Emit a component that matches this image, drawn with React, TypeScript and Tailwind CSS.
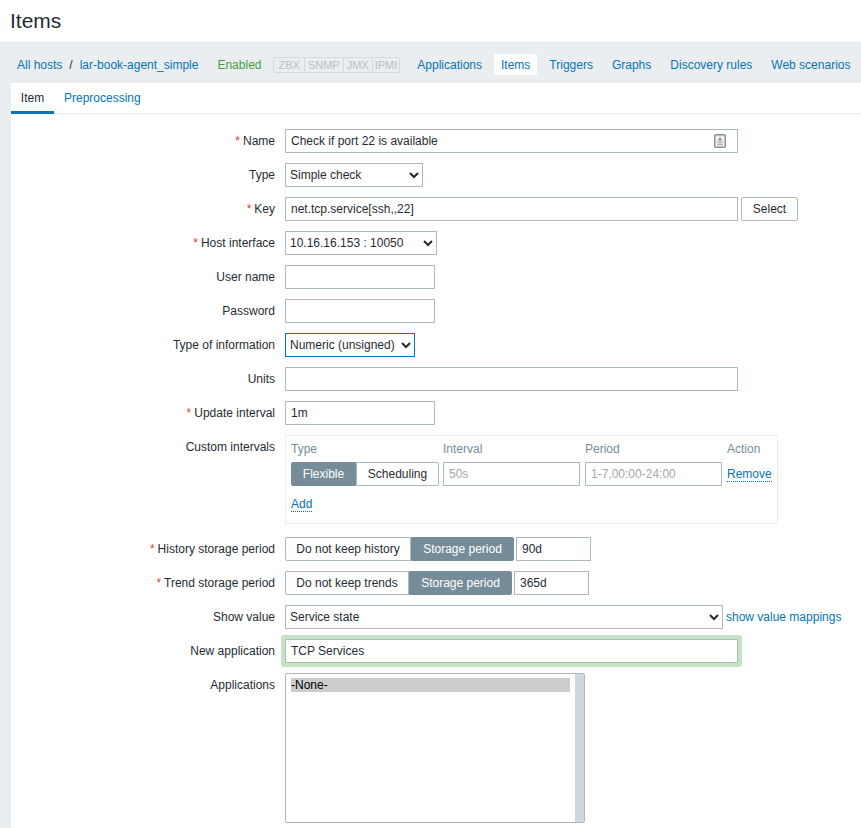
import React from "react";

const F = "h-[24px] border border-[#acbbc2] bg-white px-[5px] text-[12px] text-[#1f2c33] outline-none";
const S = "h-[24px] border bg-white text-[12px] text-[#1f2c33] outline-none";
const LINK = "text-[#0275b8]";

function Row({ label, req, children }: { label: string; req?: boolean; children: React.ReactNode }) {
  return (
    <div className="flex items-start">
      <div className="w-[274px] shrink-0 pr-[10px] pt-[4px] text-right leading-[16px]">
        {req && <span className="mr-[3px] text-[#e33734]">*</span>}
        {label}
      </div>
      {children}
    </div>
  );
}

function Seg({ left, right, leftW, rightW, active }: { left: string; right: string; leftW: number; rightW: number; active: "l" | "r" }) {
  const on = "flex h-[24px] items-center justify-center bg-[#768d99] text-white border border-[#768d99]";
  const off = "flex h-[24px] items-center justify-center bg-white text-[#1f2c33] border border-[#acbbc2]";
  return (
    <div className="flex shrink-0">
      <div className={`${active === "l" ? on : off} rounded-l-[2px]`} style={{ width: leftW }}>{left}</div>
      <div className={`${active === "r" ? on : off} rounded-r-[2px]`} style={{ width: rightW }}>{right}</div>
    </div>
  );
}

export default function App() {
  return (
    <div className="h-[828px] w-[861px] overflow-hidden bg-white text-[12px] text-[#1f2c33] font-['Liberation_Sans',Arial,sans-serif]">
      <div className="flex h-[42px] items-center pl-[10px] pb-[2px] text-[21px] leading-none">Items</div>
      <div className="flex h-[41px] items-center border-t border-[#dfe4e7] bg-[#ebeef0] pl-[17px] pt-[3px]">
        <span className={LINK}>All hosts</span>
        <span className="mx-[7px]">/</span>
        <span className={LINK}>lar-book-agent_simple</span>
        <span className="ml-[19px] text-[#429e47]">Enabled</span>
        <div className="ml-[12px] flex h-[16px] items-center rounded-[2px] border border-[#d3d9dc] text-[11px] text-[#b4bec4]">
          <span className="border-r border-[#d3d9dc] px-[4px] leading-[14px]">ZBX</span>
          <span className="border-r border-[#d3d9dc] px-[3px] leading-[14px]">SNMP</span>
          <span className="border-r border-[#d3d9dc] px-[3px] leading-[14px]">JMX</span>
          <span className="px-[2px] leading-[14px]">IPMI</span>
        </div>
        <span className={`ml-[17px] ${LINK}`}>Applications</span>
        <span className={`ml-[12px] flex h-[21px] items-center rounded-[2px] bg-white px-[7px] ${LINK}`}>Items</span>
        <span className={`ml-[12px] ${LINK}`}>Triggers</span>
        <span className={`ml-[19px] ${LINK}`}>Graphs</span>
        <span className={`ml-[19px] ${LINK}`}>Discovery rules</span>
        <span className={`ml-[19px] ${LINK}`}>Web scenarios</span>
      </div>
      <div className="flex h-[745px]">
        <div className="w-[11px] shrink-0 bg-[#ebeef0]" />
        <div className="min-w-0 flex-1">
          <div className="flex h-[31px] border-b border-[#ebeef0]">
            <div className="flex h-[31px] w-[43px] items-center justify-center border-b-[3px] border-[#0275b8] pt-[1px]">Item</div>
            <div className={`ml-[10px] flex h-[30px] items-center ${LINK}`}>Preprocessing</div>
          </div>
          <div className="flex flex-col gap-[10px] pt-[15px]">
            <Row label="Name" req>
              <div className="relative">
                <input readOnly value="Check if port 22 is available" className={`${F} w-[453px]`} />
                <svg className="absolute left-[429px] top-[5px]" width="12" height="14" viewBox="0 0 12 14">
                  <rect x="0.75" y="0.75" width="10.5" height="12.5" rx="1.2" fill="#eceff0" stroke="#8b9295" strokeWidth="1.5" />
                  <path d="M6 3 L8 6.5 H4 Z" fill="#7f878b" />
                  <rect x="3.5" y="7.5" width="5" height="1.3" fill="#a3aaad" />
                  <rect x="3.5" y="9.8" width="5" height="1.3" fill="#a3aaad" />
                </svg>
              </div>
            </Row>
            <Row label="Type">
              <select className={`${S} w-[138px] border-[#acbbc2]`} defaultValue="a"><option value="a">Simple check</option></select>
            </Row>
            <Row label="Key" req>
              <input readOnly value="net.tcp.service[ssh,,22]" className={`${F} w-[453px]`} />
              <div className="ml-[3px] flex h-[24px] w-[57px] items-center justify-center rounded-[2px] border border-[#acbbc2] bg-white">Select</div>
            </Row>
            <Row label="Host interface" req>
              <select className={`${S} w-[152px] border-[#acbbc2]`} defaultValue="a"><option value="a">10.16.16.153 : 10050</option></select>
            </Row>
            <Row label="User name"><input readOnly className={`${F} w-[150px]`} /></Row>
            <Row label="Password"><input readOnly className={`${F} w-[150px]`} /></Row>
            <Row label="Type of information">
              <select className={`${S} w-[130px] border-[#0275b8]`} defaultValue="a"><option value="a">Numeric (unsigned)</option></select>
            </Row>
            <Row label="Units"><input readOnly className={`${F} w-[453px]`} /></Row>
            <Row label="Update interval" req><input readOnly value="1m" className={`${F} w-[150px]`} /></Row>
            <Row label="Custom intervals">
              <div className="h-[89px] w-[493px] border border-[#ebeef0] px-[5px]">
                <div className="flex h-[26px] items-center text-[#768d99]">
                  <span className="w-[152px]">Type</span>
                  <span className="w-[142px]">Interval</span>
                  <span className="w-[142px]">Period</span>
                  <span>Action</span>
                </div>
                <div className="flex items-center">
                  <Seg left="Flexible" right="Scheduling" leftW={65} rightW={83} active="l" />
                  <input readOnly placeholder="50s" className={`${F} ml-[4px] w-[137px] placeholder:text-[#a0a8ac]`} />
                  <input readOnly placeholder="1-7,00:00-24:00" className={`${F} ml-[5px] w-[137px] placeholder:text-[#a0a8ac]`} />
                  <span className={`ml-[5px] border-b border-dotted border-[#0275b8] leading-[14px] ${LINK}`}>Remove</span>
                </div>
                <div className="mt-[11px] flex">
                  <span className={`border-b border-dotted border-[#0275b8] leading-[14px] ${LINK}`}>Add</span>
                </div>
              </div>
            </Row>
            <div className="mt-[3px] flex flex-col gap-[10px]">
              <Row label="History storage period" req>
                <Seg left="Do not keep history" right="Storage period" leftW={126} rightW={103} active="r" />
                <input readOnly value="90d" className={`${F} ml-[2px] w-[75px]`} />
              </Row>
              <Row label="Trend storage period" req>
                <Seg left="Do not keep trends" right="Storage period" leftW={124} rightW={103} active="r" />
                <input readOnly value="365d" className={`${F} ml-[2px] w-[75px]`} />
              </Row>
              <Row label="Show value">
                <select className={`${S} w-[438px] border-[#acbbc2]`} defaultValue="a"><option value="a">Service state</option></select>
                <span className={`ml-[3px] pt-[4px] leading-[16px] ${LINK}`}>show value mappings</span>
              </Row>
              <Row label="New application">
                <input readOnly value="TCP Services" className={`${F} w-[453px] rounded-[1px] ring-[4px] ring-[#c3e3c4]`} />
              </Row>
              <Row label="Applications">
                <div className="flex h-[150px] w-[300px] rounded-[2px] border border-[#acbbc2] bg-white pl-[5px]">
                  <div className="mt-[4px] h-[14px] w-[279px] bg-[#cccccc] text-[12px] leading-[14px] text-black">-None-</div>
                  <div className="ml-[5px] h-full flex-1 bg-[#cfd8dc]" />
                </div>
              </Row>
            </div>
          </div>
        </div>
      </div>
    </div>
  );
}
